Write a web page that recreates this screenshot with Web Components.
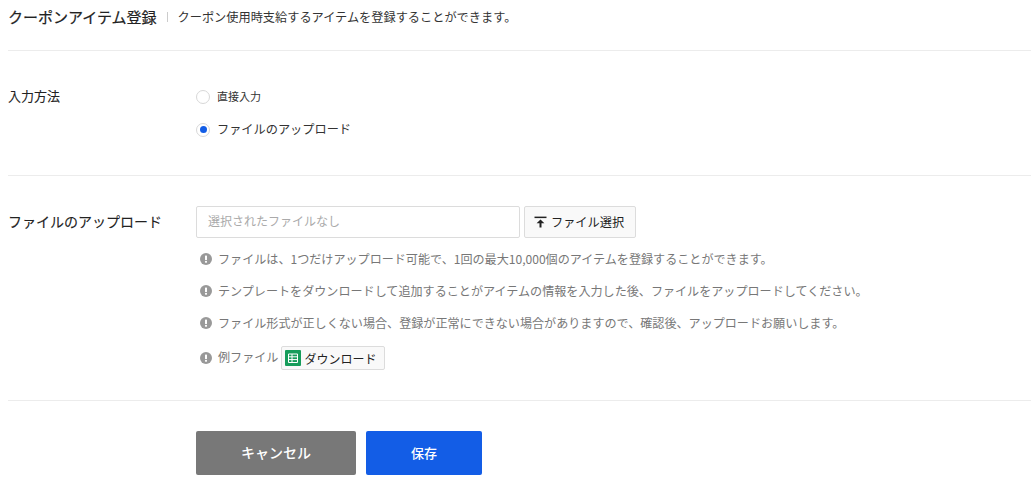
<!DOCTYPE html>
<html lang="ja">
<head>
<meta charset="utf-8">
<style>
  html, body { margin: 0; padding: 0; background: #fff; overflow: hidden; }
  body {
    font-family: "Noto Sans CJK JP", "Noto Sans", sans-serif;
    color: #222;
    height: 495px;
  }
</style>
</head>
<body>
<coupon-page>
  <page-head title-text="クーポンアイテム登録">クーポン使用時支給するアイテムを登録することができます。</page-head>

  <form-row label="入力方法" label-size="13px" pad="36px 0 36px" lab-top="0">
    <div style="display:flex;flex-direction:column;gap:14px">
      <radio-item style="font-size:11px">直接入力</radio-item>
      <radio-item checked>ファイルのアップロード</radio-item>
    </div>
  </form-row>

  <form-row label="ファイルのアップロード" label-size="14px" pad="30px 0 30px" lab-top="6px">
    <file-picker></file-picker>
    <note-list>
      <note-item>ファイルは、1つだけアップロード可能で、1回の最大10,000個のアイテムを登録することができます。</note-item>
      <note-item>テンプレートをダウンロードして追加することがアイテムの情報を入力した後、ファイルをアップロードしてください。</note-item>
      <note-item>ファイル形式が正しくない場合、登録が正常にできない場合がありますので、確認後、アップロードお願いします。</note-item>
      <note-item><span style="padding-bottom:4px">例ファイル</span><sheet-button>ダウンロード</sheet-button></note-item>
    </note-list>
  </form-row>

  <form-actions></form-actions>
</coupon-page>

<script>
class CouponPage extends HTMLElement {
  constructor() {
    super();
    this.attachShadow({ mode: 'open' });
    this.shadowRoot.innerHTML = `
      <style>
        :host { display: block; padding-left: 8px; }
      </style>
      <slot></slot>
    `;
  }
}

class PageHead extends HTMLElement {
  constructor() {
    super();
    this.attachShadow({ mode: 'open' });
    this.shadowRoot.innerHTML = `
      <style>
        :host {
          display: flex;
          align-items: center;
          height: 51px;
          padding-bottom: 17px;
          box-sizing: border-box;
          border-bottom: 1px solid #ececec;
        }
        h1 { margin: 0; font-size: 15px; font-weight: 400; color: #222; -webkit-text-stroke: .2px #222; }
        i { width: 1px; height: 10px; background: #ccc; margin: 0 10px; }
        span { font-size: 12.2px; color: #333; }
      </style>
      <h1></h1><i></i><span><slot></slot></span>
    `;
    this.shadowRoot.querySelector('h1').textContent = this.getAttribute('title-text');
  }
}

class FormRow extends HTMLElement {
  constructor() {
    super();
    this.attachShadow({ mode: 'open' });
    this.shadowRoot.innerHTML = `
      <style>
        :host {
          display: grid;
          grid-template-columns: 188px 1fr;
          border-bottom: 1px solid #ececec;
        }
        .label { font-weight: 400; color: #222; line-height: 18px; -webkit-text-stroke: .1px #222; }
      </style>
      <div class="label"></div>
      <div><slot></slot></div>
    `;
    const label = this.shadowRoot.querySelector('.label');
    label.textContent = this.getAttribute('label');
    label.style.fontSize = this.getAttribute('label-size');
    label.style.paddingTop = this.getAttribute('lab-top');
    this.style.padding = this.getAttribute('pad');
  }
}

class RadioItem extends HTMLElement {
  constructor() {
    super();
    this.attachShadow({ mode: 'open' });
    this.shadowRoot.innerHTML = `
      <style>
        :host {
          display: flex;
          align-items: center;
          gap: 7px;
          height: 19px;
          font-size: 12.2px;
          color: #333;
        }
        .dot {
          width: 14px;
          height: 14px;
          box-sizing: border-box;
          border: 1px solid #d8d8d8;
          border-radius: 50%;
          background: #fff;
          display: flex;
          align-items: center;
          justify-content: center;
        }
        :host([checked]) .dot::after {
          content: '';
          width: 7px;
          height: 7px;
          border-radius: 50%;
          background: #135de6;
        }
        .t { padding-bottom: 2px; }
      </style>
      <span class="dot"></span><span class="t"><slot></slot></span>
    `;
  }
}

class FilePicker extends HTMLElement {
  constructor() {
    super();
    this.attachShadow({ mode: 'open' });
    this.shadowRoot.innerHTML = `
      <style>
        :host { display: flex; gap: 4px; height: 32px; }
        .box {
          width: 324px;
          box-sizing: border-box;
          border: 1px solid #dcdcdc;
          border-radius: 2px;
          padding: 0 11px;
          font-size: 12px;
          line-height: 28px;
          color: #aaa;
        }
        .btn {
          display: flex;
          align-items: center;
          gap: 4px;
          width: 112px;
          box-sizing: border-box;
          padding-left: 9px;
          border: 1px solid #dcdcdc;
          border-radius: 2px;
          background: #f9f9f9;
          font-size: 12.2px;
          color: #222;
        }
        svg { width: 13px; height: 12px; flex: none; }
      </style>
      <div class="box">選択されたファイルなし</div>
      <div class="btn"><svg viewBox="0 0 13 12"><path d="M.5 .6h12v1.5H.5z" fill="#222"/><path d="M6.5 3.4 10.4 7.2H7.5V11.6H5.5V7.2H2.6z" fill="#222"/></svg><span>ファイル選択</span></div>
    `;
  }
}

class NoteList extends HTMLElement {
  constructor() {
    super();
    this.attachShadow({ mode: 'open' });
    this.shadowRoot.innerHTML = `
      <style>
        :host { display: flex; flex-direction: column; gap: 15px; padding: 12px 0 0 4px; }
      </style>
      <slot></slot>
    `;
  }
}

class NoteItem extends HTMLElement {
  constructor() {
    super();
    this.attachShadow({ mode: 'open' });
    this.shadowRoot.innerHTML = `
      <style>
        :host {
          display: flex;
          align-items: center;
          gap: 6px;
          min-height: 17px;
          font-size: 12.08px;
          color: #777;
          white-space: nowrap;
        }
        svg { width: 12px; height: 12px; flex: none; }
        .txt { display: flex; align-items: center; gap: 3px; }
      </style>
      <svg viewBox="0 0 12 12"><circle cx="6" cy="6" r="6" fill="#999"/><rect x="5" y="2.4" width="2" height="4.6" rx=".6" fill="#fff"/><circle cx="6" cy="8.8" r="1.1" fill="#fff"/></svg>
      <div class="txt"><slot></slot></div>
    `;
  }
}

class SheetButton extends HTMLElement {
  constructor() {
    super();
    this.attachShadow({ mode: 'open' });
    this.shadowRoot.innerHTML = `
      <style>
        :host {
          display: inline-flex;
          align-items: center;
          gap: 3px;
          height: 24px;
          box-sizing: border-box;
          padding: 0 8px 0 3px;
          border: 1px solid #dcdcdc;
          border-radius: 2px;
          background: #f9f9f9;
          font-size: 12px;
          color: #222;
        }
        svg { width: 16px; height: 16px; flex: none; }
      </style>
      <svg viewBox="0 0 16 16">
        <rect width="16" height="16" rx="1" fill="#169c5a"/>
        <path d="M3.5 4h9v8.5h-9zM3.5 6.8h9M3.5 9.6h9M7 4v8.5" fill="none" stroke="#fff" stroke-width="1"/>
      </svg>
      <slot></slot>
    `;
  }
}

class FormActions extends HTMLElement {
  constructor() {
    super();
    this.attachShadow({ mode: 'open' });
    this.shadowRoot.innerHTML = `
      <style>
        :host { display: flex; gap: 10px; padding: 30px 0 0 188px; }
        div {
          height: 44px;
          box-sizing: border-box;
          padding-bottom: 2px;
          display: flex;
          align-items: center;
          justify-content: center;
          border-radius: 2px;
          color: #fff;
          font-weight: 500;
        }
        .cancel { width: 160px; background: #787878; font-size: 14px; }
        .save { width: 116px; background: #135de6; font-size: 13px; }
      </style>
      <div class="cancel">キャンセル</div>
      <div class="save">保存</div>
    `;
  }
}

customElements.define('coupon-page', CouponPage);
customElements.define('page-head', PageHead);
customElements.define('form-row', FormRow);
customElements.define('radio-item', RadioItem);
customElements.define('file-picker', FilePicker);
customElements.define('note-list', NoteList);
customElements.define('note-item', NoteItem);
customElements.define('sheet-button', SheetButton);
customElements.define('form-actions', FormActions);
</script>
</body>
</html>
